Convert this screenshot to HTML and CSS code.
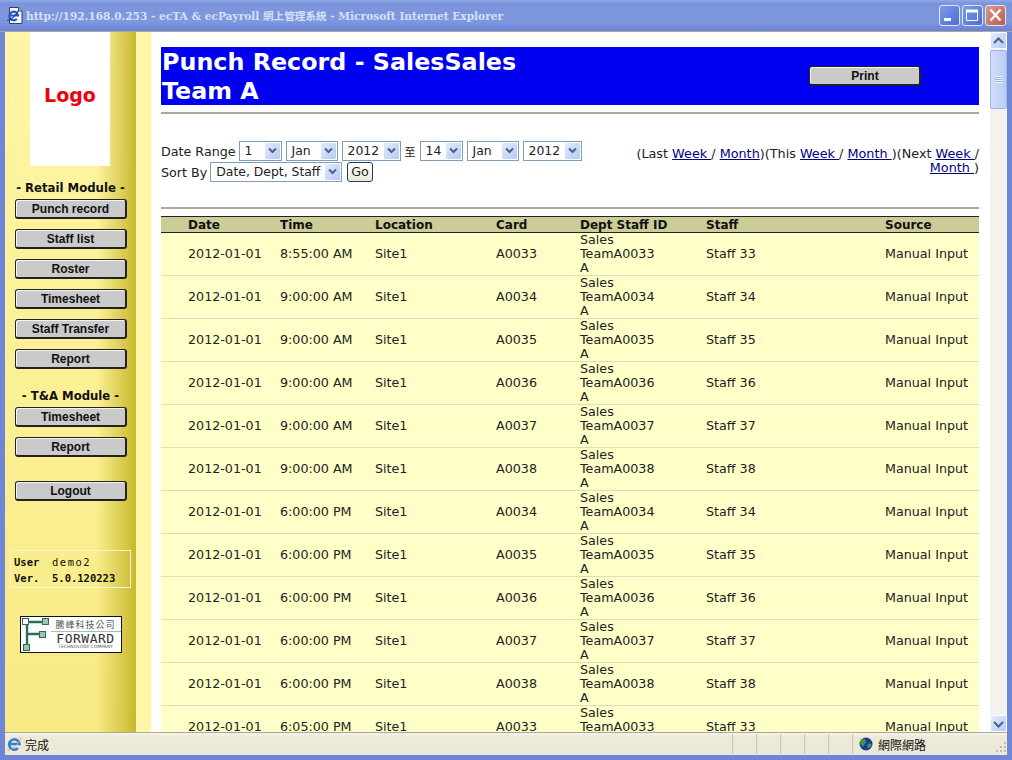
FILE: index.html
```html
<!DOCTYPE html>
<html lang="en">
<head>
    <meta charset="UTF-8">
    <title>Punch Record</title>
    <link rel="stylesheet" href="styles.css">
</head>
<body>
    <div class="window">
        <div class="titlebar">
            <svg class="ie-icon" width="18" height="20" viewBox="0 0 18 20">
                <path d="M3.500 1.500h9l3.500 3.500v12.500h-12.500z" fill="#f4f6fa" stroke="#33405f"/>
                <path d="M12.500 1.500v3.500h3.500" fill="#c8d2e6" stroke="#33405f"/>
                <path d="M3.500 9.500h8.500a4.300 4.300 0 1 0-1.200 3.500" fill="none" stroke="#2456c8" stroke-width="2.200"/>
                <path d="M1 14.500c3.500 0 9-5 11.500-10" fill="none" stroke="#1c3c9c" stroke-width="1.200"/>
            </svg>
            <span class="title-text">http://192.168.0.253 - ecTA &amp; ecPayroll 網上管理系統 - Microsoft Internet Explorer</span>
            <div class="win-buttons">
                <span class="win-btn"><svg width="19" height="19" viewBox="0 0 19 19"><rect x="4" y="12" width="7" height="3" fill="#fff"/></svg></span>
                <span class="win-btn"><svg width="19" height="19" viewBox="0 0 19 19"><path d="M3.500 4.500h11v10h-11z" fill="none" stroke="#fff"/><rect x="3" y="3.500" width="12" height="3" fill="#fff"/></svg></span>
                <span class="win-btn win-close"><svg width="19" height="19" viewBox="0 0 19 19"><path d="M4.500 3.500l10 11M14.500 3.500l-10 11" stroke="#fff" stroke-width="2.400"/></svg></span>
            </div>
        </div>

        <div class="client">
            <div class="sidebar">
                <div class="logo"><span>Logo</span></div>
                <div class="module-title">- Retail Module -</div>
                <div class="nav-btn">Punch record</div>
                <div class="nav-btn">Staff list</div>
                <div class="nav-btn">Roster</div>
                <div class="nav-btn">Timesheet</div>
                <div class="nav-btn">Staff Transfer</div>
                <div class="nav-btn">Report</div>
                <div class="module-title second">- T&amp;A Module -</div>
                <div class="nav-btn">Timesheet</div>
                <div class="nav-btn">Report</div>
                <div class="nav-btn logout">Logout</div>
                <div class="info-box">
                    <div><b>User</b><span class="user-name">demo2</span></div>
                    <div><b>Ver.</b><b>5.0.120223</b></div>
                </div>
                <div class="forward-logo">
                    <svg width="30" height="35" viewBox="0 0 30 35">
                        <path d="M6 5h18M6 5v25M6 17h14" stroke="#2f6b5b" stroke-width="2.400" fill="none"/>
                        <rect x="1.500" y="1.500" width="6" height="6" fill="#fff" stroke="#2f6b5b"/>
                        <rect x="21.500" y="1.500" width="6" height="6" fill="#9fc4ae" stroke="#2f6b5b"/>
                        <rect x="18.500" y="14.500" width="6" height="6" fill="#9fc4ae" stroke="#2f6b5b"/>
                        <rect x="2.500" y="27.500" width="6" height="6" fill="#9fc4ae" stroke="#2f6b5b"/>
                    </svg>
                    <div class="forward-text">
                        <div class="fw-cn">騰峰科技公司</div>
                        <div class="fw-name">FORWARD</div>
                        <div class="fw-sub">TECHNOLOGY COMPANY</div>
                    </div>
                </div>
            </div>
            <div class="strip"></div>

            <div class="main">
                <div class="banner">
                    <h1>Punch Record - SalesSales<br>Team A</h1>
                    <div class="nav-btn print-btn">Print</div>
                </div>
                <div class="rule"></div>

                <div class="filters">
                    <div class="filter-left">
                        <div class="filter-row">
                            <span class="filter-label">Date Range</span>
                            <span class="combo w43">1<i class="drop"><svg width="9" height="7" viewBox="0 0 9 7"><path d="M1 1.500l3.500 3.500L8 1.500" fill="none" stroke="#4d6185" stroke-width="2"/></svg></i></span>
                            <span class="combo w52">Jan<i class="drop"><svg width="9" height="7" viewBox="0 0 9 7"><path d="M1 1.500l3.500 3.500L8 1.500" fill="none" stroke="#4d6185" stroke-width="2"/></svg></i></span>
                            <span class="combo w59">2012<i class="drop"><svg width="9" height="7" viewBox="0 0 9 7"><path d="M1 1.500l3.500 3.500L8 1.500" fill="none" stroke="#4d6185" stroke-width="2"/></svg></i></span>
                            <span class="to">至</span>
                            <span class="combo w43">14<i class="drop"><svg width="9" height="7" viewBox="0 0 9 7"><path d="M1 1.500l3.500 3.500L8 1.500" fill="none" stroke="#4d6185" stroke-width="2"/></svg></i></span>
                            <span class="combo w52">Jan<i class="drop"><svg width="9" height="7" viewBox="0 0 9 7"><path d="M1 1.500l3.500 3.500L8 1.500" fill="none" stroke="#4d6185" stroke-width="2"/></svg></i></span>
                            <span class="combo w59">2012<i class="drop"><svg width="9" height="7" viewBox="0 0 9 7"><path d="M1 1.500l3.500 3.500L8 1.500" fill="none" stroke="#4d6185" stroke-width="2"/></svg></i></span>
                        </div>
                        <div class="filter-row">
                            <span class="filter-label">Sort By</span>
                            <span class="combo w132">Date, Dept, Staff<i class="drop"><svg width="9" height="7" viewBox="0 0 9 7"><path d="M1 1.500l3.500 3.500L8 1.500" fill="none" stroke="#4d6185" stroke-width="2"/></svg></i></span>
                            <span class="go-btn">Go</span>
                        </div>
                    </div>
                    <div class="quick-links">
                        (Last <a href="#">Week </a>/ <a href="#">Month</a>)(This <a href="#">Week </a>/ <a href="#">Month </a>)(Next <a href="#">Week </a>/<br><a href="#">Month </a>)
                    </div>
                </div>

                <div class="rule"></div>

                <table class="records">
                    <thead>
                        <tr><th class="c-date">Date</th><th class="c-time">Time</th><th class="c-loc">Location</th><th class="c-card">Card</th><th class="c-dept">Dept Staff ID</th><th class="c-staff">Staff</th><th class="c-src">Source</th></tr>
                    </thead>
                    <tbody>
                        <tr><td>2012-01-01</td><td>8:55:00 AM</td><td>Site1</td><td>A0033</td><td><div class="dept">Sales TeamA0033 A</div></td><td>Staff 33</td><td>Manual Input</td></tr>
                        <tr><td>2012-01-01</td><td>9:00:00 AM</td><td>Site1</td><td>A0034</td><td><div class="dept">Sales TeamA0034 A</div></td><td>Staff 34</td><td>Manual Input</td></tr>
                        <tr><td>2012-01-01</td><td>9:00:00 AM</td><td>Site1</td><td>A0035</td><td><div class="dept">Sales TeamA0035 A</div></td><td>Staff 35</td><td>Manual Input</td></tr>
                        <tr><td>2012-01-01</td><td>9:00:00 AM</td><td>Site1</td><td>A0036</td><td><div class="dept">Sales TeamA0036 A</div></td><td>Staff 36</td><td>Manual Input</td></tr>
                        <tr><td>2012-01-01</td><td>9:00:00 AM</td><td>Site1</td><td>A0037</td><td><div class="dept">Sales TeamA0037 A</div></td><td>Staff 37</td><td>Manual Input</td></tr>
                        <tr><td>2012-01-01</td><td>9:00:00 AM</td><td>Site1</td><td>A0038</td><td><div class="dept">Sales TeamA0038 A</div></td><td>Staff 38</td><td>Manual Input</td></tr>
                        <tr><td>2012-01-01</td><td>6:00:00 PM</td><td>Site1</td><td>A0034</td><td><div class="dept">Sales TeamA0034 A</div></td><td>Staff 34</td><td>Manual Input</td></tr>
                        <tr><td>2012-01-01</td><td>6:00:00 PM</td><td>Site1</td><td>A0035</td><td><div class="dept">Sales TeamA0035 A</div></td><td>Staff 35</td><td>Manual Input</td></tr>
                        <tr><td>2012-01-01</td><td>6:00:00 PM</td><td>Site1</td><td>A0036</td><td><div class="dept">Sales TeamA0036 A</div></td><td>Staff 36</td><td>Manual Input</td></tr>
                        <tr><td>2012-01-01</td><td>6:00:00 PM</td><td>Site1</td><td>A0037</td><td><div class="dept">Sales TeamA0037 A</div></td><td>Staff 37</td><td>Manual Input</td></tr>
                        <tr><td>2012-01-01</td><td>6:00:00 PM</td><td>Site1</td><td>A0038</td><td><div class="dept">Sales TeamA0038 A</div></td><td>Staff 38</td><td>Manual Input</td></tr>
                        <tr><td>2012-01-01</td><td>6:05:00 PM</td><td>Site1</td><td>A0033</td><td><div class="dept">Sales TeamA0033 A</div></td><td>Staff 33</td><td>Manual Input</td></tr>
                    </tbody>
                </table>
            </div>

            <div class="scrollbar">
                <div class="sb-arrow"><svg width="11" height="8" viewBox="0 0 11 8"><path d="M1 6l4.500-4.500L10 6" fill="none" stroke="#4d6185" stroke-width="2"/></svg></div>
                <div class="sb-thumb"><span></span></div>
                <div class="sb-track"></div>
                <div class="sb-arrow"><svg width="11" height="8" viewBox="0 0 11 8"><path d="M1 2l4.500 4.500L10 2" fill="none" stroke="#4d6185" stroke-width="2"/></svg></div>
            </div>
        </div>

        <div class="statusbar">
            <svg class="status-ie" width="18" height="18" viewBox="0 0 18 18">
                <path d="M3 9h10.500a5.200 5.200 0 1 0-1.500 4.200" fill="none" stroke="#2f7fe0" stroke-width="2.600"/>
                <path d="M1 15c4 1 11-5 14-12" fill="none" stroke="#d8b040" stroke-width="1"/>
            </svg>
            <span class="status-text">完成</span>
            <span class="status-cell"></span>
            <span class="status-cell"></span>
            <span class="status-cell"></span>
            <span class="status-cell"></span>
            <span class="status-cell"></span>
            <span class="status-cell zone">
                <svg width="14" height="14" viewBox="0 0 14 14">
                    <circle cx="7" cy="7" r="6.500" fill="#1c3c9c"/>
                    <path d="M3 2.500c2-1 4 0 4 2s-2 2-2 4-3 0-3.500-2 0-3 1.500-4zM9 7c2-1 3.500 0 3.500 1s-2 3-3 3-1.500-3-.5-4z" fill="#3c9c3c"/>
                </svg>
                網際網路
            </span>
            <svg class="grip" width="12" height="12" viewBox="0 0 12 12" fill="#bdb9a5">
                <rect x="9" y="1" width="2" height="2"/><rect x="5" y="5" width="2" height="2"/><rect x="9" y="5" width="2" height="2"/><rect x="1" y="9" width="2" height="2"/><rect x="5" y="9" width="2" height="2"/><rect x="9" y="9" width="2" height="2"/>
            </svg>
        </div>
    </div>
</body>
</html>
```

FILE: styles.css
```css
html, body {
    margin: 0;
    height: 100%;
    overflow: hidden;
}

body {
    font-family: "DejaVu Sans", "Noto Sans CJK TC", sans-serif;
    font-size: 12.7px;
    color: #222;
}

.window {
    display: flex;
    flex-direction: column;
    width: 1012px;
    height: 760px;
    box-sizing: border-box;
    padding: 0 5px 5px;
    background: #6f86d6;
    overflow: hidden;
}

/* title bar */
.titlebar {
    display: flex;
    align-items: center;
    flex: 0 0 32px;
    margin: 0 -5px;
    padding: 0 5px 0 6px;
    box-sizing: border-box;
    background: linear-gradient(180deg, #8fa8e6 0%, #7b94dc 12%, #7e97df 70%, #6a82d2 100%);
    border-bottom: 1px solid #a8a89a;
}

.ie-icon {
    margin-right: 2px;
}

.title-text {
    font-family: "DejaVu Serif", "Noto Sans CJK TC", serif;
    font-weight: bold;
    font-size: 10.6px;
    color: #d5e0f6;
    white-space: nowrap;
}

.win-buttons {
    display: flex;
    gap: 2px;
    margin-left: auto;
    margin-right: 1px;
}

.win-btn {
    display: flex;
    width: 19px;
    height: 19px;
    border: 1px solid #dfe6f8;
    border-radius: 3px;
    background: linear-gradient(135deg, #7c9cec, #4a6ed0);
}

.win-close {
    background: linear-gradient(135deg, #d89a90, #c05a48);
}

/* page area */
.client {
    display: flex;
    flex: 1;
    min-height: 0;
    background: #fff;
}

.sidebar {
    display: flex;
    flex-direction: column;
    align-items: center;
    flex: 0 0 131px;
    background:
        linear-gradient(90deg, rgba(255, 247, 150, 0) 70%, rgba(198, 182, 40, 0.95) 100%),
        linear-gradient(180deg, #fff6a6 0%, #f8ea84 100%);
}

.strip {
    flex: 0 0 15px;
    background: #fff6a6;
}

.logo {
    display: flex;
    align-items: center;
    justify-content: center;
    flex: none;
    width: 80px;
    height: 134px;
    margin-right: 1px;
    background: #fff;
}

.logo span {
    font-weight: bold;
    font-size: 19px;
    color: #f0000c;
    margin-top: -8px;
}

.module-title {
    flex: none;
    margin-top: 15px;
    height: 18px;
    line-height: 15px;
    font-weight: bold;
    font-size: 11.7px;
    color: #111;
    white-space: nowrap;
}

.module-title.second {
    margin-top: 10px;
}

.nav-btn {
    flex: none;
    box-sizing: border-box;
    width: 112px;
    height: 20px;
    margin-bottom: 10px;
    padding-left: 1px;
    line-height: 18px;
    text-align: center;
    font-family: "Liberation Sans", sans-serif;
    font-weight: bold;
    font-size: 12px;
    color: #111;
    background: #cacaca;
    border: 1px solid #222;
    border-right-width: 2px;
    border-bottom-width: 2px;
    border-radius: 3px;
    box-shadow: inset 1px 1px 0 #f4f4f4;
}

.sidebar .logout {
    margin-top: 14px;
}

.info-box {
    flex: none;
    box-sizing: border-box;
    width: 121px;
    height: 38px;
    margin-top: 39px;
    padding: 3px 3px 0;
    border: 1px solid #f4f1d4;
    font-family: "DejaVu Sans Mono", monospace;
    font-size: 10.5px;
    line-height: 16px;
    color: #111;
}

.info-box div {
    display: flex;
    white-space: nowrap;
}

.info-box b:first-child {
    width: 38px;
}

.user-name {
    letter-spacing: 1.5px;
}

.forward-logo {
    display: flex;
    flex: none;
    box-sizing: border-box;
    width: 102px;
    height: 37px;
    margin-top: 28px;
    border: 1px solid #111;
    background: #fff;
    overflow: hidden;
}

.forward-logo svg {
    flex: none;
}

.forward-text {
    flex: 1;
    padding-top: 2px;
    text-align: center;
    white-space: nowrap;
    color: #444;
}

.fw-cn {
    font-size: 9px;
    line-height: 12px;
    letter-spacing: 1px;
    color: #555;
}

.fw-name {
    font-family: "DejaVu Sans Mono", monospace;
    font-size: 13px;
    line-height: 13px;
    letter-spacing: .5px;
    border-top: 1px solid #9cc4b0;
    color: #333;
}

.fw-sub {
    margin-top: -1px;
    font-size: 4.500px;
    line-height: 6px;
    color: #555;
}

/* main column */
.main {
    flex: 1;
    min-width: 0;
    padding: 15px 11px 0 10px;
    overflow: hidden;
}

.banner {
    display: flex;
    justify-content: space-between;
    height: 58px;
    background: #0000f0;
}

.banner h1 {
    margin: 1px 0 0 1px;
    font-size: 23.8px;
    line-height: 29px;
    color: #fff;
    white-space: nowrap;
}

.print-btn {
    margin: 19px 58px 0 0;
}

.rule {
    height: 2px;
    margin-top: 7px;
    background: #aca899;
}

.filters {
    display: flex;
    justify-content: space-between;
    height: 86px;
    padding-top: 26px;
    box-sizing: border-box;
}

.filter-row {
    display: flex;
    align-items: center;
    gap: 4px;
    height: 21px;
    white-space: nowrap;
}

.filter-label {
    margin-top: 2px;
    margin-right: -1px;
}

.to {
    font-size: 11px;
}

.combo {
    position: relative;
    display: block;
    box-sizing: border-box;
    height: 20px;
    line-height: 17px;
    padding-left: 5px;
    border: 1px solid #7f9db9;
    background: #fff;
    font-size: 12.4px;
}

.w43 { width: 43px; }
.w52 { width: 52px; }
.w59 { width: 59px; }
.w132 { width: 132px; }

.drop {
    position: absolute;
    top: 1px;
    right: 1px;
    bottom: 1px;
    display: flex;
    align-items: center;
    justify-content: center;
    width: 15px;
    background: linear-gradient(135deg, #e3ebfd, #b6c9f5);
    border-radius: 1px;
}

.go-btn {
    box-sizing: border-box;
    height: 20px;
    margin-left: 1px;
    padding: 0 3px;
    line-height: 17px;
    border: 1px solid #223a66;
    border-radius: 3px;
    background: linear-gradient(180deg, #fff, #ece9d8);
}

.quick-links {
    width: 345px;
    margin-top: 7px;
    text-align: right;
    line-height: 14px;
    font-size: 12.8px;
}

.quick-links a {
    color: #000080;
}

/* table */
.records {
    width: 818px;
    margin-top: 7px;
    border-collapse: collapse;
    table-layout: fixed;
    background: #ffffc8;
}

.records th {
    height: 13px;
    padding: 2px 0 0 1px;
    text-align: left;
    font-size: 12px;
    line-height: 13px;
    color: #111;
    background: #cccc99;
    border-top: 1px solid #222;
    border-bottom: 1px solid #222;
}

.records td {
    height: 42px;
    padding: 0 0 0 1px;
    line-height: 14px;
    white-space: nowrap;
    border-bottom: 1px solid #dddcbc;
}

.records th:first-child,
.records td:first-child {
    padding-left: 27px;
}

.c-date { width: 91px; }
.c-time { width: 94px; }
.c-loc { width: 120px; }
.c-card { width: 83px; }
.c-dept { width: 125px; }
.c-staff { width: 178px; }

.records .dept {
    width: 84px;
    white-space: normal;
}

/* scrollbar */
.scrollbar {
    display: flex;
    flex-direction: column;
    flex: 0 0 17px;
    background: #f3f3ee;
}

.sb-arrow {
    display: flex;
    align-items: center;
    justify-content: center;
    box-sizing: border-box;
    height: 17px;
    border: 1px solid #fff;
    border-radius: 2px;
    background: linear-gradient(135deg, #e3ebfd, #b6c9f5);
}

.sb-thumb {
    display: flex;
    align-items: center;
    justify-content: center;
    box-sizing: border-box;
    height: 59px;
    margin-top: 1px;
    border: 1px solid #9db5e6;
    border-radius: 2px;
    background: linear-gradient(90deg, #cfdcfb, #bccdf5);
}

.sb-thumb span {
    width: 7px;
    height: 7px;
    background: repeating-linear-gradient(180deg, #eef3ff 0, #eef3ff 1px, #9db5e6 1px, #9db5e6 2px);
}

.sb-track {
    flex: 1;
}

/* status bar */
.statusbar {
    display: flex;
    align-items: center;
    flex: 0 0 23px;
    background: linear-gradient(180deg, #f6f4ea 0, #ece9d8 4px);
    border-top: 1px solid #aca899;
    box-sizing: border-box;
    font-size: 12px;
    color: #111;
}

.status-ie {
    margin: 0 1px 0 1px;
}

.status-text {
    width: 708px;
}

.status-cell {
    flex: none;
    box-sizing: border-box;
    width: 24px;
    height: 20px;
    border-left: 1px solid #c8c5b2;
}

.status-cell.zone {
    display: flex;
    align-items: center;
    gap: 5px;
    width: 143px;
    padding-left: 6px;
}

.grip {
    flex: none;
    margin-top: 6px;
}
```
